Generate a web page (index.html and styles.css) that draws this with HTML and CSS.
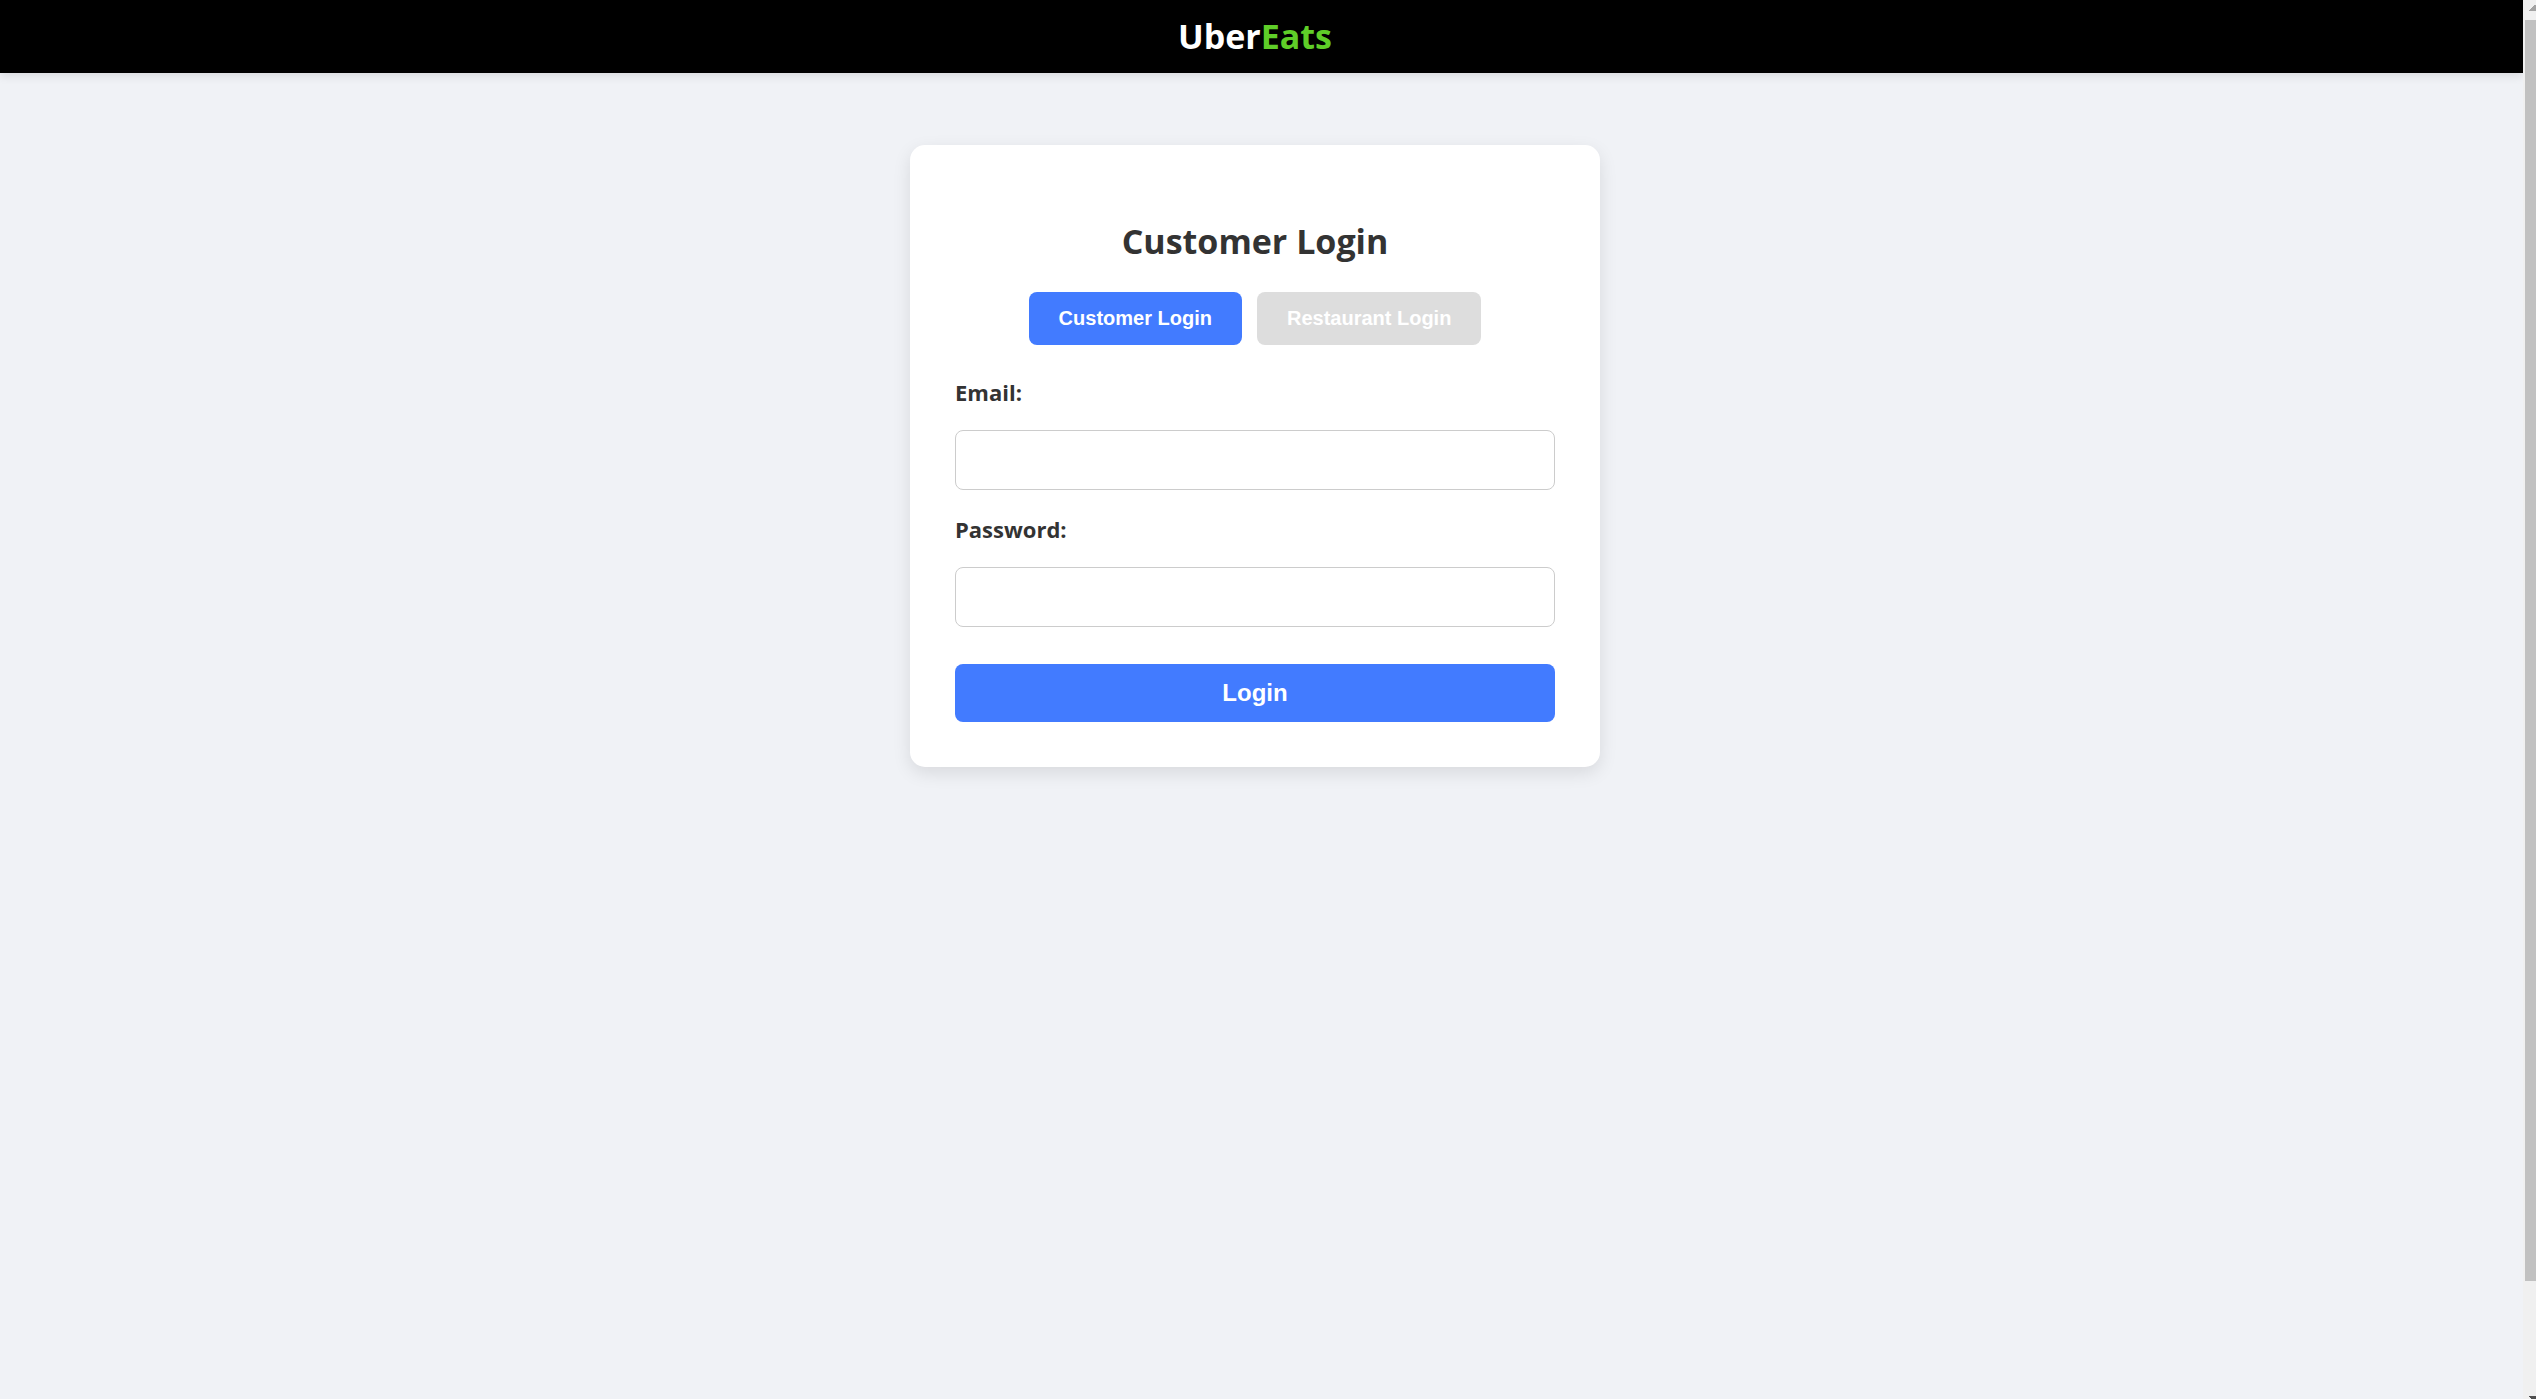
FILE: index.html
```html
<!DOCTYPE html>
<html lang="en">
<head>
  <meta charset="utf-8">
  <meta name="viewport" content="width=device-width, initial-scale=1">
  <title>UberEats</title>
  <link rel="stylesheet" href="styles.css">
</head>
<body>
  <div class="viewport">
    <div class="page">
      <header class="header">
        <div class="logo">Uber<span class="logo-accent">Eats</span></div>
      </header>
      <main class="main">
        <section class="card">
          <h1 class="title">Customer Login</h1>
          <div class="tabs">
            <button type="button" class="tab tab-active">Customer Login</button>
            <button type="button" class="tab">Restaurant Login</button>
          </div>
          <form class="form">
            <label class="label" for="email">Email:</label>
            <input class="input" type="email" id="email">
            <label class="label" for="password">Password:</label>
            <input class="input" type="password" id="password">
            <button type="submit" class="submit">Login</button>
          </form>
        </section>
      </main>
    </div>
    <div class="scrollbar" aria-hidden="true">
      <svg class="arrow" viewBox="0 0 11 20"><path d="M4 11 V10 H5 V9 H6 V8 H7 V7 H8 V6 H9 V5 H11 V11 Z" fill="#a3a3a3"/></svg>
      <div class="thumb"></div>
      <svg class="arrow arrow-down" viewBox="0 0 11 3"><path d="M4 0 H11 V3 H6 V2 H5 V1 H4 Z" fill="#505050"/></svg>
    </div>
  </div>
</body>
</html>
```
FILE: styles.css
```css
* {
  box-sizing: border-box;
}

body {
  margin: 0;
  background: #f0f2f6;
  color: #333;
  font-family: "Segoe UI", "Open Sans", "Noto Sans", sans-serif;
}

.viewport {
  display: grid;
  grid-template-columns: 1fr 13px;
  min-height: 100vh;
}

.header {
  display: flex;
  justify-content: center;
  padding: 12px 13px 13px 0;
  background: #000;
  box-shadow: 0 3px 9px rgba(0, 0, 0, 0.1);
}

.logo {
  color: #fff;
  font-size: 34px;
  font-weight: 700;
  line-height: 48px;
}

.logo-accent {
  color: #5fce28;
}

.main {
  display: flex;
  justify-content: center;
  padding: 72px 13px 72px 0;
}

.card {
  width: 690px;
  max-width: 100%;
  padding: 72px 45px 45px;
  border-radius: 15px;
  background: #fff;
  box-shadow: 0 6px 18px rgba(0, 0, 0, 0.1);
}

.title {
  margin: 0 0 27px;
  font-size: 34px;
  font-weight: 700;
  line-height: 48px;
  text-align: center;
}

.tabs {
  display: flex;
  justify-content: center;
  gap: 15px;
  margin-bottom: 30px;
}

.tab,
.submit {
  border: 0;
  border-radius: 8px;
  color: #fff;
  font-family: Arial, "Liberation Sans", sans-serif;
  font-weight: 700;
}

.tab {
  padding: 15px 30px;
  background: #ddd;
  font-size: 20px;
  line-height: 23px;
}

.tab-active,
.submit {
  background: #427bff;
}

.form {
  display: flex;
  flex-direction: column;
}

.label {
  margin-bottom: 20px;
  font-size: 22px;
  font-weight: 700;
  line-height: 35px;
}

.input {
  width: 100%;
  height: 60px;
  margin-bottom: 22px;
  padding: 15px;
  border: 1px solid #ccc;
  border-radius: 8px;
  background: #fff;
  font-size: 24px;
}

.submit {
  height: 58px;
  margin-top: 15px;
  font-size: 24px;
}

.scrollbar {
  display: flex;
  flex-direction: column;
  padding-left: 2px;
  background: #f0f0f0;
}

.arrow {
  flex: none;
  width: 11px;
  height: 20px;
}

.arrow-down {
  height: 3px;
  margin-top: auto;
}

.thumb {
  flex: 0 0 calc(90% + 2px);
  background: #c1c1c1;
}
```
